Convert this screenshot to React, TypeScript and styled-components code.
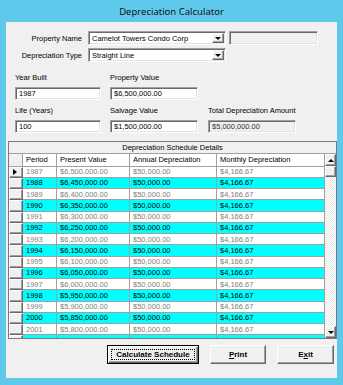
import React from 'react';
import styled, { createGlobalStyle, css } from 'styled-components';

const GlobalStyle = createGlobalStyle`
  html, body {
    margin: 0;
    padding: 0;
    background: #5fc9eb;
  }
  body {
    font-family: "Liberation Sans", Arial, sans-serif;
  }
`;

const sunken = css`
  box-sizing: border-box;
  border: 1px solid;
  border-color: #a0a0a0 #ffffff #ffffff #a0a0a0;
  box-shadow: inset 1px 1px 0 #696969, inset -1px -1px 0 #e3e3e3;
`;

const raised = css`
  box-sizing: border-box;
  background: #f0f0f0;
  border: 1px solid;
  border-color: #ffffff #696969 #696969 #ffffff;
  box-shadow: inset -1px -1px 0 #a0a0a0;
`;

const Window = styled.div`
  width: 343px;
  height: 385px;
  background: #5fc9eb;
  display: flex;
  flex-direction: column;
`;

const TitleBar = styled.div`
  height: 22px;
  flex-shrink: 0;
  display: flex;
  align-items: center;
  justify-content: center;
  font-family: "Noto Sans", "Liberation Sans", sans-serif;
  font-size: 9.5px;
  color: #111;
`;

const Client = styled.div`
  flex: 1;
  margin: 0 6px 7px;
  background: #f0f0f0;
  display: flex;
  flex-direction: column;
  font-size: 7.5px;
  color: #000;
`;

const TopForm = styled.div`
  display: flex;
  flex-direction: column;
  gap: 3px;
  padding-top: 9px;
`;

const FormRow = styled.div`
  display: flex;
  align-items: center;
  height: 14px;
`;

const SideLabel = styled.div`
  width: 76px;
  margin-right: 6px;
  text-align: right;
`;

const Combo = styled.div`
  ${sunken};
  width: 138px;
  height: 14px;
  background: #fff;
  display: flex;
  align-items: stretch;
`;

const ComboText = styled.div`
  flex: 1;
  padding-left: 3px;
  display: flex;
  align-items: center;
`;

const DropButton = styled.div`
  ${raised};
  width: 12px;
  margin: 1px;
  display: flex;
  align-items: center;
  justify-content: center;
`;

const Arrow = styled.span<{ $up?: boolean }>`
  width: 0;
  height: 0;
  border-left: 3px solid transparent;
  border-right: 3px solid transparent;
  ${(p) =>
    p.$up ? 'border-bottom: 3px solid #000;' : 'border-top: 3px solid #000;'}
`;

const SideBox = styled.div`
  ${sunken};
  width: 89px;
  height: 14px;
  margin-left: 3px;
  background: #f0f0f0;
`;

const Fields = styled.div`
  display: grid;
  grid-template-columns: 95px 98px 88px;
  row-gap: 6px;
  padding-left: 9px;
  margin-top: 11px;
`;

const Field = styled.div`
  display: flex;
  flex-direction: column;
  gap: 4px;
`;

const FieldLabel = styled.div`
  height: 10px;
  line-height: 10px;
  white-space: nowrap;
`;

const TextBox = styled.div<{ $width: number; $readonly?: boolean }>`
  ${sunken};
  width: ${(p) => p.$width}px;
  height: 13px;
  padding-left: 3px;
  display: flex;
  align-items: center;
  background: ${(p) => (p.$readonly ? '#f0f0f0' : '#fff')};
  color: ${(p) => (p.$readonly ? '#333' : '#000')};
`;

const GridFrame = styled.div`
  box-sizing: border-box;
  width: 329px;
  height: 198px;
  margin: 8px 0 0 2px;
  border: 1px solid #7a7a7a;
  display: flex;
  flex-direction: column;
  overflow: hidden;
  background: #fff;
`;

const GridCaption = styled.div`
  box-sizing: border-box;
  height: 12px;
  flex-shrink: 0;
  background: #f0f0f0;
  border-bottom: 1px solid #a0a0a0;
  text-align: center;
  line-height: 11px;
`;

const GridBody = styled.div`
  flex: 1;
  min-height: 0;
  display: flex;
`;

const Table = styled.div`
  flex: 1;
  overflow: hidden;
  display: flex;
  flex-direction: column;
`;

const columns = '14px 34px 73px 87px 108px';

const HeaderRow = styled.div`
  height: 12.5px;
  flex-shrink: 0;
  display: grid;
  grid-template-columns: ${columns};
`;

const HeaderCell = styled.div`
  box-sizing: border-box;
  background: #fff;
  border-right: 1px solid #a0a0a0;
  border-bottom: 1px solid #a0a0a0;
  padding-left: 3px;
  display: flex;
  align-items: center;
  white-space: nowrap;
`;

const Corner = styled.div`
  box-sizing: border-box;
  background: #f0f0f0;
  border-right: 1px solid #a0a0a0;
  border-bottom: 1px solid #a0a0a0;
`;

const DataRow = styled.div`
  height: 11.25px;
  flex-shrink: 0;
  display: grid;
  grid-template-columns: ${columns};
`;

const RowHeader = styled.div`
  ${raised};
  display: flex;
  align-items: center;
  padding-left: 3px;
`;

const Pointer = styled.span`
  width: 0;
  height: 0;
  border-top: 3.5px solid transparent;
  border-bottom: 3.5px solid transparent;
  border-left: 4px solid #000;
`;

const Cell = styled.div<{ $alt: boolean }>`
  box-sizing: border-box;
  background: ${(p) => (p.$alt ? '#00ffff' : '#fff')};
  color: ${(p) => (p.$alt ? '#000' : '#808080')};
  border-right: 1px solid #a0a0a0;
  border-bottom: 1px solid #a0a0a0;
  padding-left: 3px;
  display: flex;
  align-items: center;
  white-space: nowrap;
`;

const ScrollBar = styled.div`
  width: 11px;
  flex-shrink: 0;
  display: flex;
  flex-direction: column;
`;

const ScrollButton = styled.div`
  ${raised};
  height: 12px;
  flex-shrink: 0;
  display: flex;
  align-items: center;
  justify-content: center;
`;

const Thumb = styled.div`
  ${raised};
  height: 11px;
  flex-shrink: 0;
`;

const Track = styled.div`
  flex: 1;
  background: repeating-conic-gradient(#ffffff 0 25%, #e6e6e6 0 50%) 0 0 / 2px
    2px;
`;

const ButtonRow = styled.div`
  display: flex;
  justify-content: flex-end;
  gap: 11px;
  margin-top: 6px;
  padding-right: 3px;
`;

const Button = styled.button<{ $width: number; $default?: boolean }>`
  position: relative;
  box-sizing: border-box;
  width: ${(p) => p.$width}px;
  height: 19px;
  padding: 0;
  background: #f0f0f0;
  font-family: "Liberation Sans", Arial, sans-serif;
  font-size: 8px;
  font-weight: bold;
  color: #000;
  border: 1px solid;
  ${(p) =>
    p.$default
      ? css`
          border-color: #000;
          box-shadow: inset 1px 1px 0 #fff, inset -1px -1px 0 #696969,
            inset -2px -2px 0 #a0a0a0;
          &::after {
            content: '';
            position: absolute;
            inset: 3px;
            border: 1px dotted #000;
          }
        `
      : css`
          border-color: #fff #696969 #696969 #fff;
          box-shadow: inset -1px -1px 0 #a0a0a0;
        `}
`;

const rows = Array.from({ length: 16 }, (_, i) => ({
  year: 1987 + i,
  present: 6500000 - i * 50000,
}));

const money = (n: number) =>
  '$' +
  n.toLocaleString('en-US', { minimumFractionDigits: 2, maximumFractionDigits: 2 });

const ScheduleGrid = () => (
  <GridFrame>
    <GridCaption>Depreciation Schedule Details</GridCaption>
    <GridBody>
      <Table>
        <HeaderRow>
          <Corner />
          <HeaderCell>Period</HeaderCell>
          <HeaderCell>Present Value</HeaderCell>
          <HeaderCell>Annual Depreciation</HeaderCell>
          <HeaderCell>Monthly Depreciation</HeaderCell>
        </HeaderRow>
        {rows.map((r, i) => {
          const alt = i % 2 === 1;
          return (
            <DataRow key={r.year}>
              <RowHeader>{i === 0 && <Pointer />}</RowHeader>
              <Cell $alt={alt}>{r.year}</Cell>
              <Cell $alt={alt}>{money(r.present)}</Cell>
              <Cell $alt={alt}>$50,000.00</Cell>
              <Cell $alt={alt}>$4,166.67</Cell>
            </DataRow>
          );
        })}
      </Table>
      <ScrollBar>
        <ScrollButton>
          <Arrow $up />
        </ScrollButton>
        <Thumb />
        <Track />
        <ScrollButton>
          <Arrow />
        </ScrollButton>
      </ScrollBar>
    </GridBody>
  </GridFrame>
);

const App = () => (
  <Window>
    <GlobalStyle />
    <TitleBar>Depreciation Calculator</TitleBar>
    <Client>
      <TopForm>
        <FormRow>
          <SideLabel>Property Name</SideLabel>
          <Combo>
            <ComboText>Camelot Towers Condo Corp</ComboText>
            <DropButton>
              <Arrow />
            </DropButton>
          </Combo>
          <SideBox />
        </FormRow>
        <FormRow>
          <SideLabel>Depreciation Type</SideLabel>
          <Combo>
            <ComboText>Straight Line</ComboText>
            <DropButton>
              <Arrow />
            </DropButton>
          </Combo>
        </FormRow>
      </TopForm>
      <Fields>
        <Field>
          <FieldLabel>Year Built</FieldLabel>
          <TextBox $width={86}>1987</TextBox>
        </Field>
        <Field>
          <FieldLabel>Property Value</FieldLabel>
          <TextBox $width={88}>$6,500,000.00</TextBox>
        </Field>
        <div />
        <Field>
          <FieldLabel>Life (Years)</FieldLabel>
          <TextBox $width={86}>100</TextBox>
        </Field>
        <Field>
          <FieldLabel>Salvage Value</FieldLabel>
          <TextBox $width={88}>$1,500,000.00</TextBox>
        </Field>
        <Field>
          <FieldLabel>Total Depreciation Amount</FieldLabel>
          <TextBox $width={88} $readonly>
            $5,000,000.00
          </TextBox>
        </Field>
      </Fields>
      <ScheduleGrid />
      <ButtonRow>
        <Button $width={92} $default>
          Calculate Schedule
        </Button>
        <Button $width={56}>
          <u>P</u>rint
        </Button>
        <Button $width={57}>
          E<u>x</u>it
        </Button>
      </ButtonRow>
    </Client>
  </Window>
);

export default App;
